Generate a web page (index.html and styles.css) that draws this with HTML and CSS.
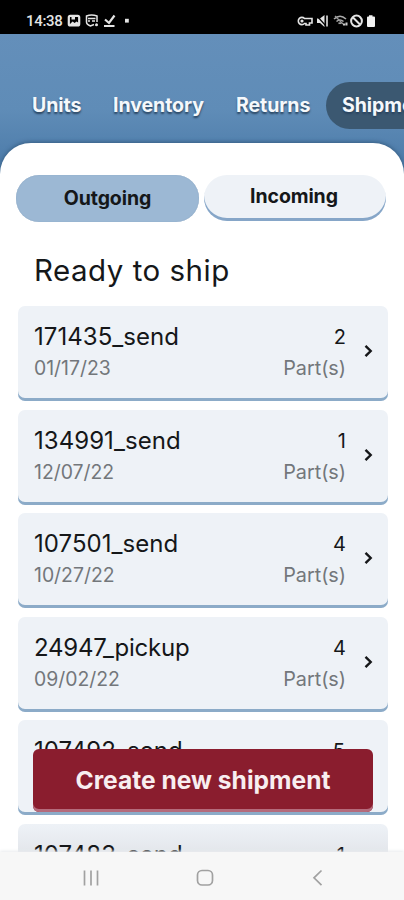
FILE: index.html
```html
<!DOCTYPE html>
<html lang="en">
<head>
<meta charset="utf-8">
<title>Shipments</title>
<link rel="stylesheet" href="styles.css">
</head>
<body>
<div class="phone">
  <header class="status">
    <span class="time">14:38</span>
    <svg class="left-icons" width="64" height="16" viewBox="0 0 64 16" fill="none" stroke="#e4e4e4" stroke-width="1.5">
      <rect x="1.800" y="2.800" width="10.400" height="9.600" rx="1.500" stroke-width="2.200"/>
      <path d="M2 12l3.500-3.500 2.200 1.500 1.800-1.600L12 10v2.500H2z" fill="#e4e4e4" stroke="none"/>
      <path d="M4.500 3.500v3h3.500v-3z" fill="#e4e4e4" stroke="none"/>
      <path d="M27 11.500l-3.500 1.500q-4-1.500-4-4V3q5-2 10.500 0v6M21 5.500h7.500M21 8h2m2 0h3"/>
      <circle cx="29.500" cy="11.800" r="1.500" fill="#e4e4e4" stroke="none"/>
      <path d="M37 13h10.500M38 6.500l4 3.500 5.500-7.500" stroke-width="2.200"/>
      <rect x="58" y="5.800" width="3.800" height="3.800" fill="#e4e4e4" stroke="none"/>
    </svg>
    <svg class="right-icons" width="82" height="16" viewBox="0 0 82 16" fill="none" stroke="#e4e4e4" stroke-width="1.600">
      <path d="M7.500 5.500a3.600 3.600 0 1 0 0 5h1.500v1.500h3.500v-2H15V5.500z"/>
      <circle cx="5" cy="8" r=".8" fill="#e4e4e4"/>
      <path d="M20 5.500h3l4.500-3.500v12l-4.500-4h-3z" fill="#e4e4e4" stroke="none"/>
      <path d="M19.500 2.500l9.500 10.500" stroke="#000" stroke-width="1.200"/>
      <path d="M30 2.500v11" stroke="#c8c8c8" stroke-width="1.800"/>
      <path d="M37 6q6-5.500 12 0M39.500 8.500q3.500-3 7 0M41.500 10.500q1.500-1 3 0" stroke="#aaa"/>
      <path d="M38 3l8 8" stroke="#999" stroke-width="1.200"/>
      <path d="M46 11.500h2.200M49.500 9.500v3" stroke="#ccc" stroke-width="2"/>
      <circle cx="59.500" cy="8" r="5.400" stroke-width="2"/>
      <path d="M56 4.500l7 7" stroke-width="2"/>
      <path d="M70 4.500q0-1 1-1h1V2.300h3.500v1.200h1.500q1 0 1 1v8.500q0 1-1 1H71q-1 0-1-1z" fill="#f1f1f1" stroke="none"/>
    </svg>
  </header>
  <nav class="tabs">
    <a class="tab units">Units</a>
    <a class="tab inventory">Inventory</a>
    <a class="tab returns">Returns</a>
    <a class="tab active">Shipments</a>
  </nav>
  <main class="sheet">
    <div class="segments">
      <button class="segment selected">Outgoing</button>
      <button class="segment">Incoming</button>
    </div>
    <h1>Ready to ship</h1>
    <div class="list">
      <article class="row"><div class="info"><b>171435_send</b><small>01/17/23</small></div><div class="count"><b>2</b><small>Part(s)</small></div><svg class="chevron" width="9" height="14" viewBox="0 0 9 14"><path d="M1.500 1.800L6.700 7l-5.200 5.200"/></svg></article>
      <article class="row"><div class="info"><b>134991_send</b><small>12/07/22</small></div><div class="count"><b>1</b><small>Part(s)</small></div><svg class="chevron" width="9" height="14" viewBox="0 0 9 14"><path d="M1.500 1.800L6.700 7l-5.200 5.200"/></svg></article>
      <article class="row"><div class="info"><b>107501_send</b><small>10/27/22</small></div><div class="count"><b>4</b><small>Part(s)</small></div><svg class="chevron" width="9" height="14" viewBox="0 0 9 14"><path d="M1.500 1.800L6.700 7l-5.200 5.200"/></svg></article>
      <article class="row"><div class="info"><b class="narrow">24947_pickup</b><small>09/02/22</small></div><div class="count"><b>4</b><small>Part(s)</small></div><svg class="chevron" width="9" height="14" viewBox="0 0 9 14"><path d="M1.500 1.800L6.700 7l-5.200 5.200"/></svg></article>
      <article class="row"><div class="info"><b>107492_send</b></div><div class="count"><b>5</b></div></article>
      <article class="row shaded"><div class="info"><b>107483_send</b></div><div class="count"><b>1</b></div></article>
    </div>
  </main>
  <button class="create">Create new shipment</button>
  <footer class="system-nav">
    <svg width="18" height="18" viewBox="0 0 18 18"><path d="M2.500 1.500v15M9 1.500v15M15.500 1.500v15"/></svg>
    <svg width="18" height="18" viewBox="0 0 18 18"><rect x="1.500" y="1.500" width="15" height="14.500" rx="4.500"/></svg>
    <svg width="18" height="18" viewBox="0 0 18 18"><path d="M12.500 1.500L5 8.800l7.500 7.400"/></svg>
  </footer>
</div>
</body>
</html>
```
FILE: styles.css
```css
* { box-sizing: border-box; }
body { margin: 0; font-family: Inter, "Liberation Sans", sans-serif; color: #151719; }
button { border: 0; padding: 0; font-family: inherit; color: inherit; }
.phone { position: relative; width: 404px; height: 900px; overflow: hidden; display: flex; flex-direction: column; background: linear-gradient(#648fba 34px, #5f8cb7 110px, #4b7aa8 170px); }
.status { flex: none; height: 34px; padding: 7px 25px 0 26px; background: #000; color: #e4e4e4; display: flex; align-items: center; }
.time { font: 500 15px/18px Roboto, sans-serif; letter-spacing: -0.3px; width: 41px; }
.right-icons { margin-left: auto; }
.tabs { flex: none; height: 109px; padding: 48px 0 0 16px; display: flex; }
.tab { flex: none; height: 47px; padding: 0 16px; border-radius: 24px; line-height: 46px; font-size: 19.5px; font-weight: 700; letter-spacing: -0.05px; color: #f5f8fb; text-shadow: 0 2px 2px #28435f; white-space: nowrap; }
.units { width: 81px; }
.inventory { width: 123px; }
.returns { width: 106px; }
.active { background: #3b5871; }
.sheet { flex: 1; min-height: 0; overflow: hidden; padding: 32px 16px 0; background: #fff; border-radius: 31px 31px 0 0; box-shadow: 0 -1px 4px #365d82; }
.segments { display: grid; grid-template-columns: 183px 182px; gap: 5px; width: 370px; }
.segment { height: 46px; padding: 0 2px 4px 0; border-radius: 23px; background: #eef2f7; box-shadow: inset 0 -3px #86a6c8; font-size: 19.5px; font-weight: 700; letter-spacing: -0.1px; }
.selected { height: 47px; padding: 0 0 1px; background: #9cb8d4; box-shadow: inset 0 0 1px #7897b5; }
h1 { margin: 31px 0 19px 18px; font-size: 29.5px; letter-spacing: 0.5px; line-height: 34px; font-weight: 400; }
.list { display: flex; flex-direction: column; gap: 8.500px; width: 370px; margin-left: 2px; }
.row { flex: none; height: 95px; padding: 17px 16px 0; border-radius: 7px; background: #eef2f7; box-shadow: inset 0 -3px #8cabc8; display: flex; }
.shaded { background: linear-gradient(#eef2f7, #e3e6eb 29px); }
.info, .count { display: flex; flex-direction: column; }
.row b { font-size: 24px; line-height: 28px; font-weight: 400; letter-spacing: 0.05px; }
.row b.narrow { letter-spacing: -0.2px; }
.row small { margin-top: 5px; font-size: 19.8px; line-height: 24px; color: #73777b; }
.row .info small { font-size: 19.4px; }
.count { margin-left: auto; width: 90px; text-align: right; padding-right: 27px; white-space: nowrap; align-items: flex-end; }
.row .count b { font-size: 20px; }
.chevron { width: 9px; margin: 21px 0 0 -9px; }
.row:has(.chevron) { padding-right: 15px; }
.chevron path { fill: none; stroke: #151719; stroke-width: 2.400; }
.create { position: absolute; left: 33px; top: 749px; width: 340px; height: 63px; padding-bottom: 2px; border-radius: 6px; background: #8a1d2e; box-shadow: inset 0 -3px #b56b7c; color: #f8eef0; font-size: 24.6px; font-weight: 700; }
.system-nav { position: relative; flex: none; height: 48px; background: #f7f7f7; box-shadow: 0 -1px 3px #e8eaed; display: flex; justify-content: space-between; padding: 17px 77px 0 82px; }
.system-nav svg { fill: none; stroke: #a1a1a1; stroke-width: 1.700; }
```
